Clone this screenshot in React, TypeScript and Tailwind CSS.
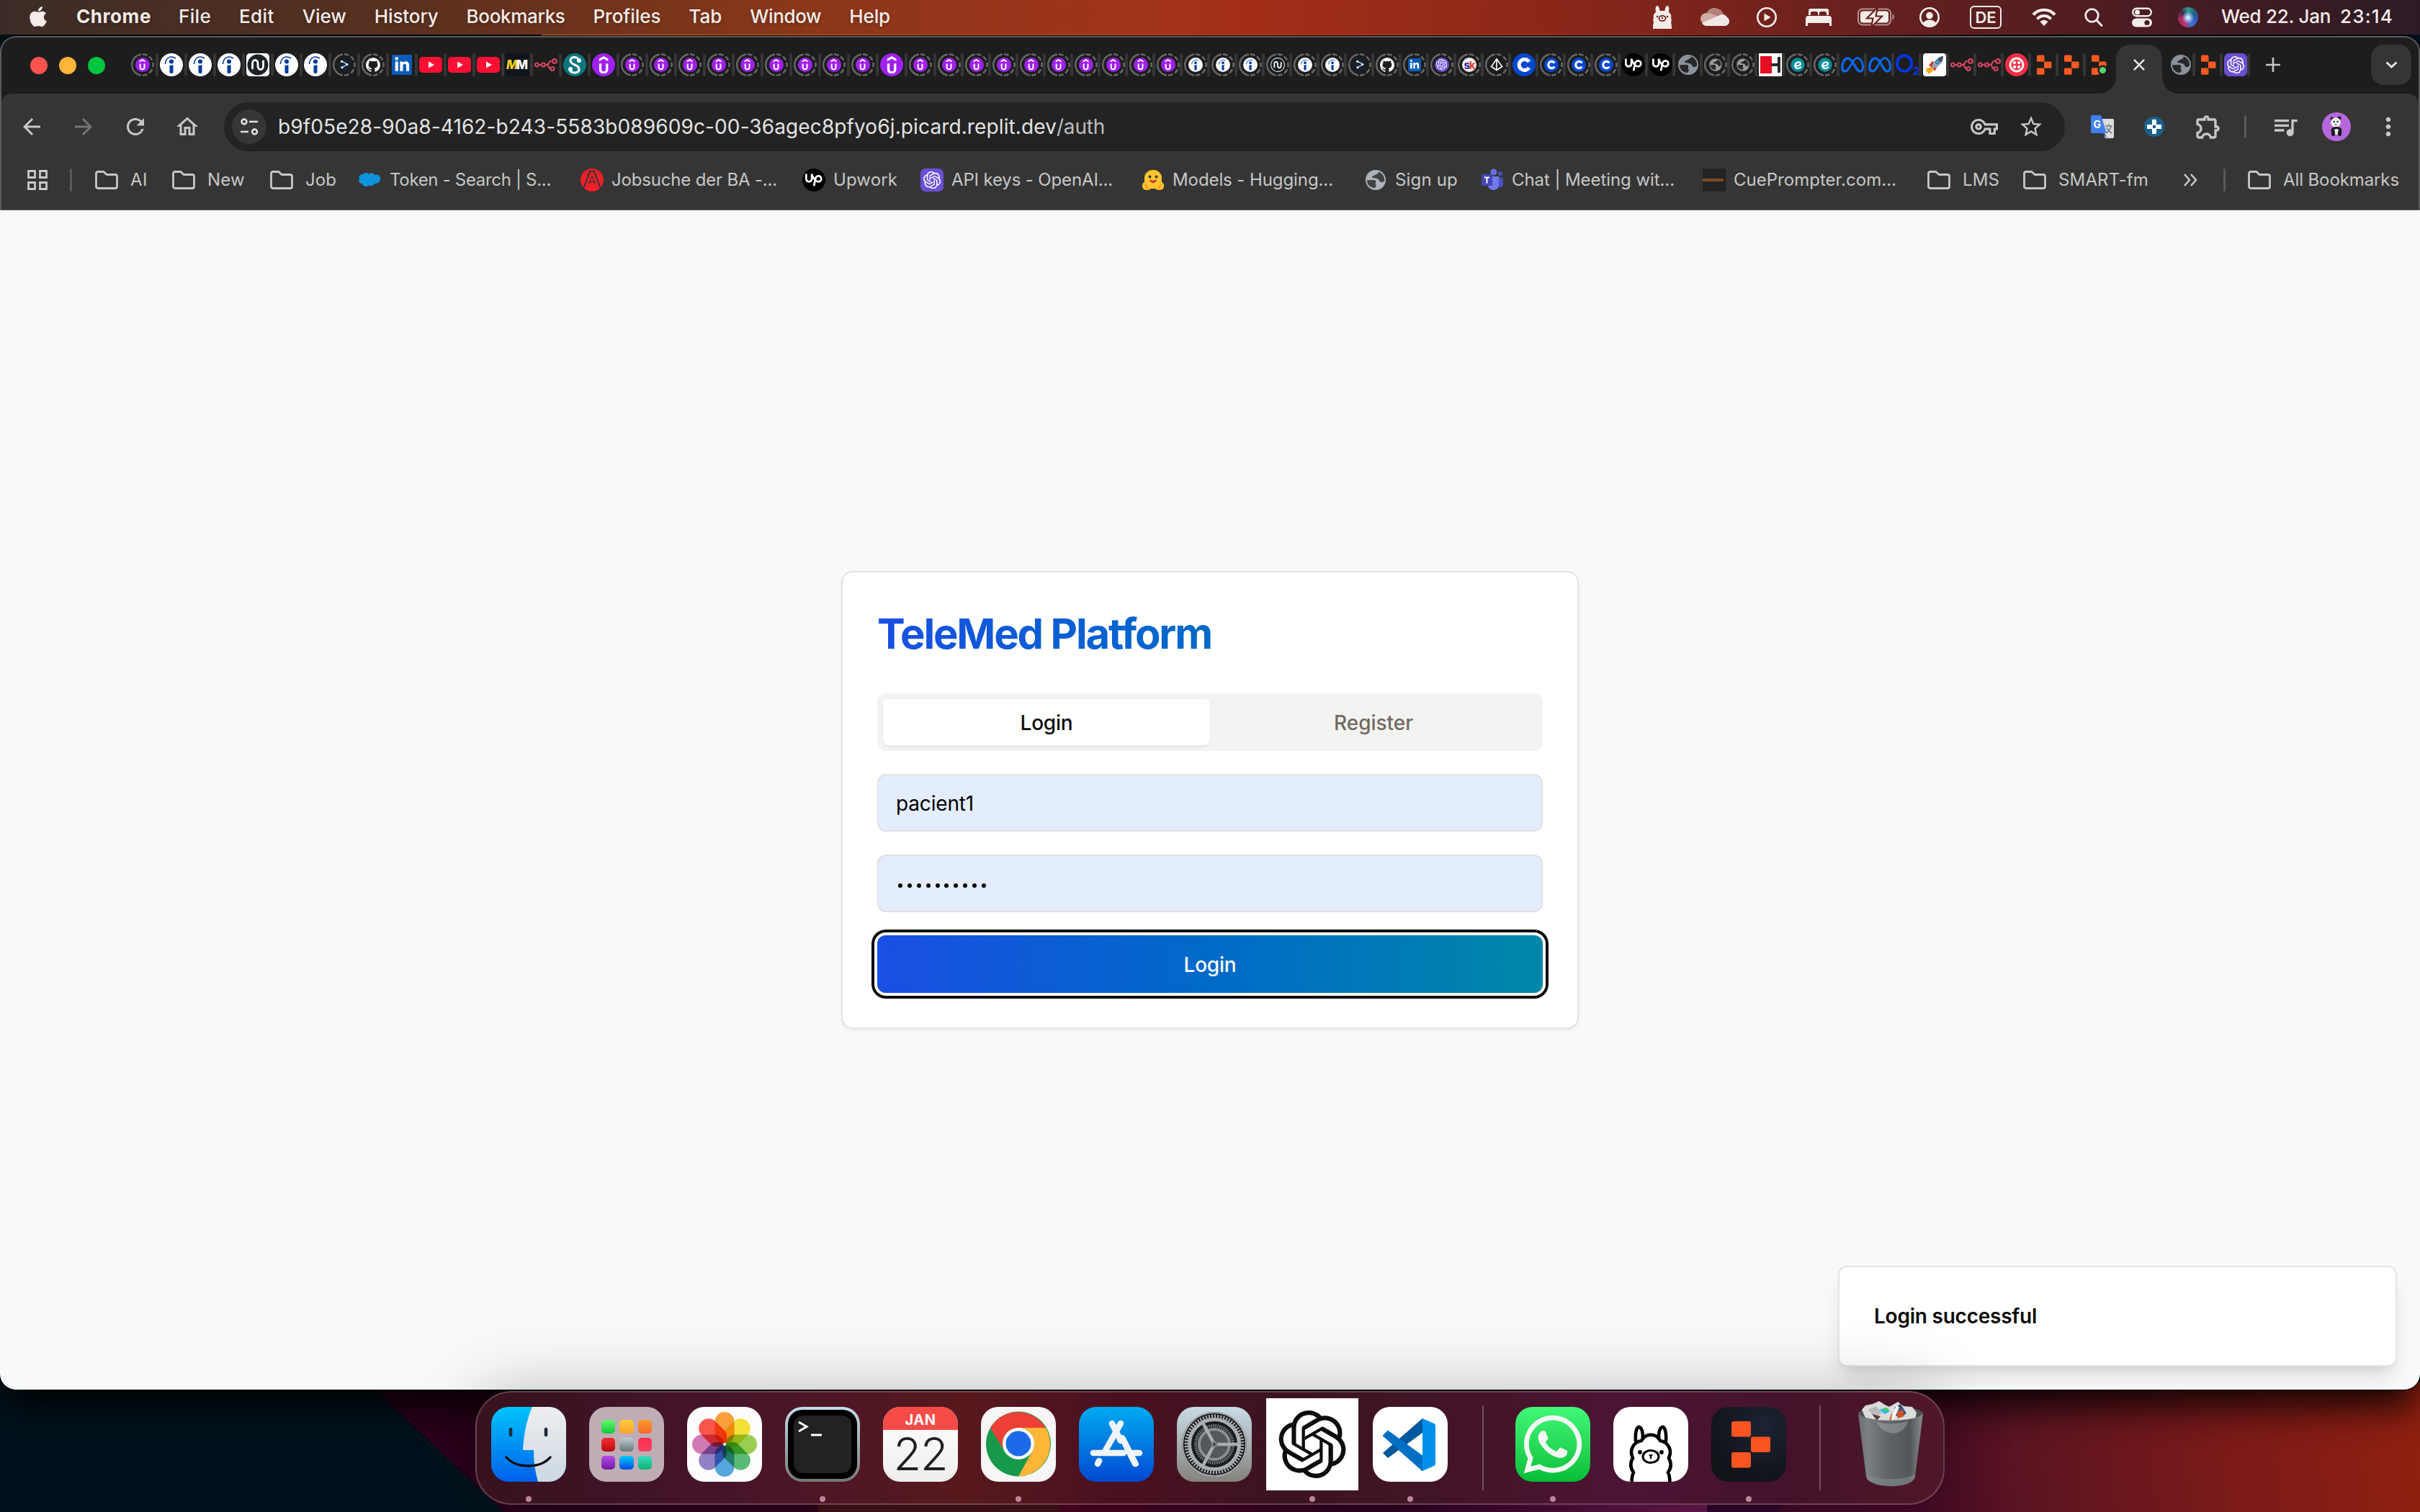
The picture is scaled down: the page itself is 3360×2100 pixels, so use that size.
import React, { useLayoutEffect, useRef, useState } from "react";
import { FaApple, FaWhatsapp, FaLinkedinIn } from "react-icons/fa";
import { SiUdemy, SiGithub, SiMeta, SiOpenai, SiUpwork } from "react-icons/si";
import { MdOutlineVpnKey, MdStarBorder, MdOutlineExtension, MdOutlineQueueMusic, MdMoreVert, MdArrowBack, MdArrowForward, MdRefresh, MdOutlineHome } from "react-icons/md";

/* Single-line label whose tracking is adjusted so that it fills exactly `w` pixels. */
function Fit({ w, className = "", children }: { w: number; className?: string; children: string }) {
  const ref = useRef<HTMLSpanElement>(null);
  const [tracking, setTracking] = useState(0);
  useLayoutEffect(() => {
    if (ref.current) setTracking((w - ref.current.getBoundingClientRect().width) / children.length);
  }, []);
  return (
    <span className={"inline-flex shrink-0 whitespace-pre " + className} style={{ width: w }}>
      <span ref={ref} style={{ letterSpacing: tracking }}>{children}</span>
    </span>
  );
}

/* ---------- Menu bar ---------- */

const MENUS: [string, number][] = [
  ["File", 45], ["Edit", 49], ["View", 61], ["History", 89], ["Bookmarks", 137], ["Profiles", 94], ["Tab", 46], ["Window", 99], ["Help", 57],
];

function MenuBar() {
  return (
    <div className="relative z-20 flex h-[48px] shrink-0 items-center bg-[linear-gradient(90deg,#3c2c27_0px,#59301f_560px,#8a3719_1100px,#a3331a_1640px,#a32e17_1720px,#8a2719_2160px,#67201f_2600px,#481c22_3000px,#2c1b25_3360px)] text-[26px] font-medium text-[#f3ece9]">
      <div className="flex h-full items-center pb-[3px] pl-[37px] [text-shadow:0_2px_4px_rgba(0,0,0,0.3)]">
        <FaApple className="mr-[37px] size-[32px]" />
        <Fit w={104} className="mr-[38px] font-bold">Chrome</Fit>
        <div className="flex gap-[38.9px]">
          {MENUS.map(([t, w]) => <Fit key={t} w={w}>{t}</Fit>)}
        </div>
      </div>
      <div className="ml-auto flex h-full items-center pr-[37px]">
        <svg className="h-[34px] w-[26px]" viewBox="0 0 26 34" fill="currentColor">
          <path d="M4 10C3 4 4 1 6 1s3 3 3.500 7h7C17 4 18 1 20 1s3 3 2 9c3 2 4 5 3 8 1 2 1 4 0 6 1 3 1 6 1 9H0c0-3 0-6 1-9-1-2-1-4 0-6-1-3 0-6 3-8Z" />
          <ellipse cx="13" cy="18.500" rx="4.600" ry="3.600" fill="none" stroke="#7a231a" strokeWidth="1.800" />
          <circle cx="6" cy="16" r="1.300" fill="#7a231a" /><circle cx="20" cy="16" r="1.300" fill="#7a231a" /><circle cx="13" cy="18" r="1.200" fill="#7a231a" />
        </svg>
        <svg className="ml-[40px] h-[28px] w-[40px]" viewBox="0 0 40 28">
          <path d="M9 24A9 9 0 0 1 0 17C0 11 4 8 9 8A12 12 0 0 1 20 1L30 12 16 21Z" fill="#d0aca7" />
          <path d="M10 7.500A12 12 0 0 1 32 10.500L26 13Z" fill="#b5807a" />
          <path d="M2 22 27 11c3-2 8-1 10 3 5 3 4 12-4 12H9c-4 0-6-2-7-4Z" fill="#f0e8e6" />
        </svg>
        <svg className="ml-[38px] size-[28px]" viewBox="0 0 28 28" fill="none" stroke="currentColor"><circle cx="14" cy="14" r="12.700" strokeWidth="2.600" /><path d="M10.500 8.500v11l9-5.500Z" fill="currentColor" stroke="none" /></svg>
        <svg className="ml-[40px] h-[25px] w-[36px]" viewBox="0 0 36 25" fill="currentColor"><path d="M4 9V3a3 3 0 0 1 3-3h22a3 3 0 0 1 3 3v6h-3V6c0-1-1-2-2-2h-6c-1 0-2 1-2 2v3h-2V6c0-1-1-2-2-2H9C8 4 7 5 7 6v3Z" /><path d="M0 24V14c0-2 1-4 4-4h28c3 0 4 2 4 4v10h-3v-4H3v4Z" /></svg>
        <svg className="ml-[36px] h-[30px] w-[52px]" viewBox="0 0 52 30">
          <rect x="1" y="3.500" width="45" height="22" rx="6" fill="none" stroke="#fff" strokeOpacity=".5" strokeWidth="2" />
          <rect x="4" y="6.500" width="39" height="16" rx="3.500" fill="#f3ece9" /><path d="M48.500 10v9c3-1 3-8 0-9Z" fill="#fff" opacity=".5" />
          <path d="M28 1 13 16.500h8.500L19 29l15-15.500h-8.500Z" fill="#f3ece9" stroke="#67201f" strokeWidth="2.200" />
        </svg>
        <svg className="ml-[34px] size-[28px]" viewBox="0 0 28 28"><circle cx="14" cy="14" r="12.700" fill="none" stroke="currentColor" strokeWidth="2.600" /><circle cx="14" cy="11.500" r="4.800" fill="currentColor" /><path d="M5 22c3-6 15-6 18 0-4 6-14 6-18 0Z" fill="currentColor" /></svg>
        <div className="ml-[42px] flex h-[32px] w-[44px] items-center justify-center rounded-[6px] border-2 border-[#f3ece9] text-[22px] font-semibold">DE</div>
        <svg className="ml-[42px] h-[26px] w-[34px]" viewBox="0 0 34 26" fill="none" stroke="currentColor" strokeWidth="4.200"><path d="M2 9.500C10 .500 24 .500 32 9.500M7.500 15.500c5-6 14-6 19 0" /><path d="m17 25-5.500-5.800c3-3.400 8-3.400 11 0Z" fill="currentColor" stroke="none" /></svg>
        <svg className="ml-[39px] size-[26px]" viewBox="0 0 26 26" fill="none" stroke="currentColor" strokeWidth="2.800" strokeLinecap="round"><circle cx="10.500" cy="10.500" r="8.800" /><path d="m17 17 7 7.500" /></svg>
        <svg className="ml-[40px] size-[28px]" viewBox="0 0 28 28"><rect x="1.200" y="1.700" width="25.600" height="10.600" rx="5.300" fill="none" stroke="currentColor" strokeWidth="2.400" /><circle cx="7.500" cy="7" r="3.500" fill="currentColor" /><rect y="15.500" width="28" height="12" rx="6" fill="currentColor" /><circle cx="21" cy="21.500" r="3.600" fill="#481c22" /></svg>
        <div className="ml-[36px] size-[28px] rounded-full bg-[radial-gradient(circle_at_50%_52%,#ffffff_0%,#9fc4ef_16%,transparent_42%),conic-gradient(#2c9c8a,#23627f,#2a58b8,#3b76d8,#c02f6c,#b02b60,#402a4c,#2c9c8a)]" />
        <Fit w={152} className="ml-[32px] mb-[3px]">Wed 22. Jan</Fit>
        <Fit w={74} className="mb-[3px] ml-[13px]">23:14</Fit>
      </div>
    </div>
  );
}

/* ---------- Favicons (32 × 32 drawings) ---------- */

function Globe({ c = "#8a929c", bg = "#1d1d1d" }: { c?: string; bg?: string }) {
  return (
    <svg viewBox="0 0 32 32" className="size-full"><circle cx="16" cy="16" r="14" fill={c} /><path d="M4 16c4 1 10-1 12 1 1 2-1 3 0 5 2 2 0 4-1 5C8 27 4 22 4 16ZM19 4.500c2 2-1 3-3 4-2 2-5 1-5 4 3 2 8 0 10 4 1 2 2 4 7 1 1-6-3-12-9-13Z" fill={bg} opacity=".9" /></svg>
  );
}

function Nodes() {
  return <svg viewBox="0 0 32 32" className="size-full" fill="none" stroke="#d2455f" strokeWidth="2.200"><circle cx="3.500" cy="16" r="2.500" /><circle cx="12.500" cy="16" r="2.500" /><circle cx="28" cy="11" r="2.800" /><circle cx="25" cy="21.500" r="2.500" /><path d="M6 16h4m5 0h2c4 0 2-5 6-5h2m-8 5c4 0 2 5 5 5.500" /></svg>;
}

function Replit({ dot = false }: { dot?: boolean }) {
  return <svg viewBox="0 0 32 32" className="size-full" fill="#fc5a20"><rect x="6" y="2.500" width="10.500" height="9.200" rx="1.500" /><rect x="16" y="11.500" width="10.500" height="9.200" rx="1.500" /><rect x="6" y="20.500" width="10.500" height="9.200" rx="1.500" />{dot && <circle cx="21.500" cy="23.500" r="7" fill="#1d1d1d" />}{dot && <rect x="6" y="20.500" width="8" height="9.200" rx="1.500" />}{dot && <circle cx="21.500" cy="23.500" r="4.500" fill="#53d46f" />}</svg>;
}

function TwilioDisc() {
  return <svg viewBox="0 0 32 32" className="size-full"><circle cx="16" cy="16" r="16" fill="#f22f46" /><circle cx="16" cy="16" r="9" fill="none" stroke="#fff" strokeWidth="2.800" /><g fill="#fff"><circle cx="13" cy="13" r="2.200" /><circle cx="19" cy="13" r="2.200" /><circle cx="13" cy="19" r="2.200" /><circle cx="19" cy="19" r="2.200" /></g></svg>;
}

type Kind = "U" | "i" | "nu" | "gt" | "gh" | "in" | "yt" | "mm" | "n8" | "S" | "ai" | "sk" | "py" | "C" | "up" | "gl" | "H" | "e" | "me" | "o2" | "rk" | "tw" | "re" | "rd";

function Favicon({ k, small = false }: { k: Kind; small?: boolean }) {
  switch (k) {
    case "U": return <div className="flex size-full items-center justify-center rounded-full bg-[#a020f0] text-white"><SiUdemy className="size-[76%]" /></div>;
    case "i": return <svg viewBox="0 0 32 32" className="size-full"><circle cx="16" cy="16" r="16" fill="#fff" /><circle cx="16" cy="11.500" r="3" fill="#003a9b" /><path d="M14 17c2 .600 3 0 4-.500v10c0 1.500-4 1.500-4 0Z" fill="#003a9b" stroke="#003a9b" /><path d="M7.500 15C8 6 15 2.500 22 7" fill="none" stroke="#003a9b" strokeWidth="1.500" /></svg>;
    case "nu": return <svg viewBox="0 0 32 32" className="size-full" fill="none"><rect width="32" height="32" rx={small ? 16 : 5} fill="#fff" /><circle cx="16" cy="16" r="14.500" fill="#1c2127" /><path d="M8.500 21v-7c0-6 7.500-6 7.500 0v4c0 6 7.500 6 7.500 0v-7" stroke="#fff" strokeWidth="2.800" strokeLinecap="round" /></svg>;
    case "gt": return <svg viewBox="0 0 32 32" className="size-full" fill="none"><path d="m16 2 12 7v13l-12 8-12-8V9Z" fill="#11263c" /><path d="m10 8 13 7-12 7" stroke="#fff" strokeWidth="1.800" /><g fill="#fff"><circle cx="10.500" cy="8.500" r="2.400" /><circle cx="22" cy="15" r="2.400" /><circle cx="11" cy="22" r="2.400" /></g></svg>;
    case "gh": return <SiGithub className="size-full text-white" />;
    case "in": return <div className="flex size-full items-center justify-center p-[6%]"><div className="flex size-full items-center justify-center rounded-[2px] bg-[#0a5cb8]"><FaLinkedinIn className="size-[80%] text-white" /></div></div>;
    case "yt": return <svg viewBox="0 0 32 32" className="size-full"><rect y="5" width="32" height="22" rx="5" fill="#ff0f33" /><path d="M13 11.500v9l8-4.500Z" fill="#fff" /></svg>;
    case "mm": return <div className="flex size-full items-center justify-center bg-[#10151d] text-[17px] font-extrabold italic tracking-[-2px]"><span className="text-[#f2d322]">M</span><span className="pr-[2px] not-italic text-white">M</span></div>;
    case "n8": return <Nodes />;
    case "S": return <svg viewBox="0 0 32 32" className="size-full" fill="none"><circle cx="16" cy="16" r="16" fill="#0d7580" /><path d="M22 10c-2-6-12-6-12 0 0 7 12 5 12 12 0 6-10 7-13 1" stroke="#fff" strokeWidth="3" /><circle cx="22" cy="10" r="3" fill="#fff" /><circle cx="10" cy="22" r="3" fill="#fff" /></svg>;
    case "ai": return <div className={"flex size-full items-center justify-center bg-[#6b4fd3] " + (small ? "rounded-full" : "rounded-[7px]")}><SiOpenai className="size-[76%] text-white" /></div>;
    case "sk": return <div className="flex size-full items-center justify-center rounded-full bg-[#f3eef2] text-[15px] font-bold leading-none tracking-[-1px]"><span className="text-[#25259a]">s</span><span className="text-[#ee3b30]">k</span></div>;
    case "py": return <svg viewBox="0 0 32 32" className="size-full" fill="none" stroke="#fff" strokeWidth="2.600"><path d="M16 3 4 20l12 8 12-8ZM16 3v25" /></svg>;
    case "C": return <svg viewBox="0 0 32 32" className="size-full" fill="none"><circle cx="16" cy="16" r="16" fill="#0448cf" /><path d="M23 12a7.500 7.500 0 1 0 0 8" stroke="#fff" strokeWidth="5" /></svg>;
    case "up": return <div className="flex size-full items-center justify-center rounded-full bg-black text-white"><SiUpwork className="size-[74%]" /></div>;
    case "gl": return <Globe c={small ? "#9a9a9a" : "#8a929c"} />;
    case "H": return <svg viewBox="0 0 32 32" className="size-full"><path d="M0 0h32v32H0z" fill="#fff" /><path d="M2 4h16v24H2z" fill="#e50d22" /><path d="M26 5h4v22h-4v-9H17v-4h9Z" fill="#26262a" /></svg>;
    case "e": return <svg viewBox="0 0 32 32" className="size-full" fill="none"><circle cx="16" cy="16" r="15.500" fill="#0a8c9c" /><path d="M10 18c9 1 14-2 12-6-2-3-12-2-12 6 0 7 10 8 14 2" stroke="#fff" strokeWidth="3.500" /></svg>;
    case "me": return <SiMeta className="size-full text-[#0a68e8]" />;
    case "o2": return (
      <div className="flex size-full items-end">
        <svg viewBox="0 0 24 32" className="h-full w-[24px]"><ellipse cx="12" cy="14" rx="10" ry="11" fill="none" stroke="#0037ef" strokeWidth="3.800" /></svg>
        <span className="w-[8px] text-[14px] font-bold leading-[14px] tracking-[-1px] text-[#0037ef]">2</span>
      </div>
    );
    case "rk": return <svg viewBox="0 0 32 32" className="size-full"><rect width="32" height="32" rx="4" fill="#fff" /><path d="m8 17 5-6 5 3 2 4-4 7-2-4-4-3Z" fill="#d9271d" /><path d="M28 4c-8 1-14 8-16 14l3 3C23 18 28 12 28 4Z" fill="#8fa8bb" /><path d="M28 4c-3 0-6 2-8 4l5 5c2-3 3-6 3-9Z" fill="#35506b" /><circle cx="20" cy="12.500" r="2.400" fill="#4bb6e8" stroke="#34526c" /><path d="m12 19-7 2-1 6 3-2v4l5-3 3-4Z" fill="#f6a81c" /></svg>;
    case "tw": return <TwilioDisc />;
    case "re": return <Replit />;
    case "rd": return <Replit dot />;
  }
}

function TabIcon({ k, small }: { k: Kind; small: boolean }) {
  if (!small) return <div className="size-[32px] shrink-0"><Favicon k={k} /></div>;
  return (
    <div className="relative flex size-[32px] shrink-0 items-center justify-center">
      <svg className="absolute inset-0" viewBox="0 0 32 32" fill="none" stroke="#666" strokeWidth="2.600"><path d="M14 30.500A14.600 14.600 0 0 1 14 1.500" /><path d="M16 1.400A14.600 14.600 0 0 1 16 30.600" strokeDasharray="6.700 3" /></svg>
      <div className="size-[20px]"><Favicon k={k} small /></div>
    </div>
  );
}

/* A trailing dot marks a sleeping tab, drawn smaller inside a dashed ring. */
const WIDE_TABS = "U. i i i nu i i gt. gh. in yt yt yt mm n8 S U U. U. U. U. U. U. U. U. U. U U.".split(" ");
const NARROW_TABS = "U. U. U. U. U. U. U. U. U. i. i. i. nu. i. i. gt. gh. in. ai. sk. py. C C. C. C. up up gl gl. gl. H e. e. me me o2 rk n8 n8 tw re re rd".split(" ");

function Sep() {
  return <div className="h-[32px] w-[4px] shrink-0 rounded-full bg-[#363636]" />;
}

function TabStrip() {
  return (
    <div className="flex h-[78px] items-center pb-[2px] pl-[40px]">
      <div className="mt-[2px] flex gap-[16px]">
        <div className="size-[24px] rounded-full bg-[#ff544d]" /><div className="size-[24px] rounded-full bg-[#ffb43a]" /><div className="size-[24px] rounded-full bg-[#00c63d]" />
      </div>
      <div className="ml-[36px] flex">
        {WIDE_TABS.map((t, i) => (
          <div key={i} className="flex w-[40px] items-center gap-[2px]"><TabIcon k={t.replace(".", "") as Kind} small={t.endsWith(".")} /><Sep /></div>
        ))}
        {NARROW_TABS.map((t, i) => (
          <div key={i} className="flex w-[38px] items-center"><TabIcon k={t.replace(".", "") as Kind} small={t.endsWith(".")} />{i < 42 && <Sep />}</div>
        ))}
      </div>
      <div className="relative ml-[2px] -mb-[2px] mt-[10px] flex h-[68px] w-[64px] shrink-0 items-center justify-center rounded-t-[20px] bg-[#353535] pb-[12px]">
        <svg className="size-[16px]" viewBox="0 0 17 17" stroke="#e8e8e8" strokeWidth="2.600"><path d="m1 1 15 15M16 1 1 16" /></svg>
        <svg className="absolute bottom-0 -left-[24px] size-[24px]" viewBox="0 0 24 24" fill="#353535"><path d="M24 0v24H0C14 24 24 14 24 0Z" /></svg>
        <svg className="absolute bottom-0 -right-[24px] size-[24px]" viewBox="0 0 24 24" fill="#353535"><path d="M0 0v24h24C10 24 0 14 0 0Z" /></svg>
      </div>
      <div className="ml-[10px] flex">
        {["gl", "re", "ai"].map((k) => <div key={k} className="flex w-[38px] items-center"><TabIcon k={k as Kind} small={false} /><Sep /></div>)}
      </div>
      <svg className="ml-[20px] size-[20px]" viewBox="0 0 20 20" stroke="#c7c7c7" strokeWidth="2.600"><path d="M10 0v20M0 10h20" /></svg>
      <div className="ml-auto mr-[10px] flex h-[56px] w-[56px] items-center justify-center rounded-[18px] bg-[#353535]">
        <svg className="h-[10px] w-[17px]" viewBox="0 0 17 10" fill="none" stroke="#e3e3e3" strokeWidth="3"><path d="m1.500 1.500 7 6.500 7-6.500" /></svg>
      </div>
    </div>
  );
}

function Toolbar() {
  return (
    <div className="flex h-[92px] items-center text-[#c7c7c7]">
      <MdArrowBack className="ml-[24px] size-[36px]" />
      <MdArrowForward className="ml-[36px] size-[36px] text-[#757575]" />
      <MdRefresh className="ml-[36px] size-[36px]" />
      <MdOutlineHome className="ml-[36px] size-[36px]" />
      <div className="ml-[33px] flex h-[68px] w-[2556px] shrink-0 items-center rounded-full bg-[#232323] pl-[11px] pr-[29px]">
        <div className="flex size-[48px] items-center justify-center rounded-full bg-[#363636]">
          <svg className="size-[26px]" viewBox="0 0 26 26" fill="none" stroke="#e3e3e3" strokeWidth="2.600"><circle cx="6" cy="6" r="3.400" /><path d="M13 6h12M1 20h11" /><circle cx="20.500" cy="20" r="3.400" /></svg>
        </div>
        <div className="ml-[16px] flex text-[28px] text-[#e3e3e3]">
          <Fit w={1081}>b9f05e28-90a8-4162-b243-5583b089609c-00-36agec8pfyo6j.picard.replit.dev</Fit>
          <Fit w={67} className="text-[#bdbdbd]">/auth</Fit>
        </div>
        <MdOutlineVpnKey className="ml-auto size-[38px]" />
        <MdStarBorder className="ml-[28px] size-[36px]" />
      </div>
      <svg className="ml-[36px] size-[32px] shrink-0" viewBox="0 0 32 32">
        <path d="M12 5h18a2 2 0 0 1 2 2v23a2 2 0 0 1-2 2H20Z" fill="#dcdcdc" /><path d="m16 25 7 7-4-7Z" fill="#1a50c0" />
        <path d="M2 0h12l8 25H2a2 2 0 0 1-2-2V2a2 2 0 0 1 2-2Z" fill="#4280ee" />
        <text x="3.500" y="17.500" fontSize="14" fontWeight="700" fill="#fff">G</text><path d="M20 15h10m-5-2.500V15m3 0c-1 5-4 8-7 10m1-8c1 3 4 6 7 8" stroke="#6c8088" strokeWidth="1.600" fill="none" />
      </svg>
      <div className="ml-[42px] flex size-[28px] items-center justify-center rounded-full bg-[#19618b]"><svg viewBox="0 0 20 20" className="size-[20px]"><path d="M7 0h6v7h7v6h-7v7H7v-7H0V7h7Z" fill="#fff" /><path d="M8 8h4v4H8Z" fill="#19618b" /></svg></div>
      <MdOutlineExtension className="ml-[41px] size-[40px]" />
      <div className="ml-[30px] h-[32px] w-[3px] rounded-full bg-[#5a5a5a]" />
      <MdOutlineQueueMusic className="ml-[34px] size-[40px]" />
      <div className="ml-[31px] size-[40px] overflow-hidden rounded-full bg-[#b667dc]">
        <svg viewBox="0 0 40 40" className="size-full"><circle cx="14" cy="9" r="2.500" fill="#1b1b1e" /><circle cx="24" cy="8" r="2.500" fill="#1b1b1e" /><circle cx="19" cy="14" r="6.800" fill="#f2f2f2" /><ellipse cx="20" cy="25" rx="7.500" ry="5" fill="#1b1b1e" /><ellipse cx="20" cy="27" rx="3.500" ry="4" fill="#eee" /><rect x="13" y="25" width="5" height="8" rx="2.500" fill="#1b1b1e" /><rect x="22" y="25" width="5" height="8" rx="2.500" fill="#1b1b1e" /><circle cx="16.500" cy="13" r="1.200" fill="#1b1b1e" /><circle cx="21.500" cy="13" r="1.200" fill="#1b1b1e" /><path d="M17.500 17h3" stroke="#1b1b1e" /></svg>
      </div>
      <MdMoreVert className="ml-[32px] size-[40px]" />
    </div>
  );
}

function Folder() {
  return <svg className="mr-[6px] h-[26px] w-[32px]" viewBox="0 0 32 26" fill="none" stroke="#c7c7c7" strokeWidth="2.800" strokeLinejoin="round"><path d="M1.500 4c0-1.500 1-2.500 2.500-2.500h8l4 4h12c1.500 0 2.500 1 2.500 2.500v14c0 1.500-1 2.500-2.500 2.500H4c-1.500 0-2.500-1-2.500-2.500Z" /></svg>;
}

const BOOKMARKS: { col: string; label: string; w: number; icon: React.ReactNode }[] = [
  { col: "w-[107px]", label: "AI", w: 24, icon: <Folder /> },
  { col: "w-[136px]", label: "New", w: 52, icon: <Folder /> },
  { col: "w-[123px]", label: "Job", w: 43, icon: <Folder /> },
  { col: "w-[308px]", label: "Token - Search | S...", w: 224, icon: <svg viewBox="0 0 32 32" className="size-[32px]"><path d="M6 8c3-3 6-2 8 0 3-3 7-2 8 1 6-2 9 3 8 7s-5 5-8 5c-2 4-6 4-8 2-3 4-8 2-9-2-4 0-6-3-4-7-2-3 1-6 5-6Z" fill="#0d94dc" /></svg> },
  { col: "w-[308px]", label: "Jobsuche der BA -...", w: 230, icon: <svg viewBox="0 0 32 32" className="size-[32px]"><circle cx="16" cy="16" r="16" fill="#ef2027" /><path d="m4 28 9-24h6l9 24" fill="none" stroke="#353535" strokeWidth="2" /><path d="M11 21 16 9l5 12c-3-2-7-2-10 0Z" fill="#353535" /><path d="m13.500 18 2.500-6 2.500 6Z" fill="#ef2027" /></svg> },
  { col: "w-[164px]", label: "Upwork", w: 89, icon: <div className="size-[32px]"><Favicon k="up" /></div> },
  { col: "w-[307px]", label: "API keys - OpenAI...", w: 224, icon: <div className="size-[32px]"><Favicon k="ai" /></div> },
  { col: "w-[309px]", label: "Models - Hugging...", w: 223, icon: <svg viewBox="0 0 32 32" className="size-[32px]"><path d="M4 13a12 11 0 0 1 24 0v6c4 2 4 7 1 10-4 2-8 1-10-1h-6c-2 2-6 3-10 1-3-3-3-8 1-10Z" fill="#ffc42e" /><circle cx="11.500" cy="11.500" r="1.900" fill="#3b3435" /><circle cx="20.500" cy="11.500" r="1.900" fill="#3b3435" /><path d="M11 15.500c3 1.500 7 1.500 10 0-.500 6-9.500 6-10 0Z" fill="#c9352c" /><path d="m9 29-4-7m18 7 4-7" stroke="#f0962a" strokeWidth="2" /></svg> },
  { col: "w-[162px]", label: "Sign up", w: 87, icon: <div className="size-[32px]"><Globe c="#aeb4ba" bg="#353535" /></div> },
  { col: "w-[308px]", label: "Chat | Meeting wit...", w: 226, icon: <svg viewBox="0 0 32 32" className="size-[32px]"><circle cx="18" cy="5" r="4.500" fill="#6570e0" /><circle cx="27" cy="7" r="3" fill="#4a52c0" /><rect x="22" y="12" width="9" height="14" rx="4" fill="#4a52c0" /><path d="M10 11h15v12c0 9-14 9-15 1Z" fill="#717ae8" /><rect x="1" y="8" width="15" height="16" rx="1.500" fill="#4148b4" /><path d="M5 12.500h7m-3.500 0v8" stroke="#fff" strokeWidth="2" /></svg> },
  { col: "w-[312px]", label: "CuePrompter.com...", w: 226, icon: <div className="flex size-[32px] flex-col justify-center bg-[#232323]"><div className="h-[4px] w-[29px] bg-[#7c4a22]" /></div> },
  { col: "w-[133px]", label: "LMS", w: 51, icon: <Folder /> },
  { col: "w-[222px]", label: "SMART-fm", w: 125, icon: <Folder /> },
];

function BookmarksBar() {
  return (
    <div className="flex h-[70px] items-center border-b-2 border-[#424242] pb-[12px] pl-[36px] text-[24px] text-[#c7c7c7]">
      <svg className="size-[28px]" viewBox="0 0 28 28" fill="none" stroke="#c7c7c7" strokeWidth="2.800"><path d="M1.500 1.500h9v9h-9ZM17.500 1.500h9v9h-9ZM1.500 17.500h9v9h-9ZM17.500 17.500h9v9h-9Z" /></svg>
      <div className="ml-[31px] h-[32px] w-[3px] rounded-full bg-[#5a5a5a]" />
      <div className="ml-[32px] flex">
        {BOOKMARKS.map((b) => (
          <div key={b.label} className={"flex items-center " + b.col}>{b.icon}<Fit w={b.w} className="ml-[11px]">{b.label}</Fit></div>
        ))}
      </div>
      <svg className="ml-[1px] h-[18px] w-[19px]" viewBox="0 0 19 18" fill="none" stroke="#c7c7c7" strokeWidth="2.600"><path d="m1 1 7 8-7 8M10 1l7 8-7 8" /></svg>
      <div className="ml-[36px] mr-[31px] h-[32px] w-[3px] rounded-full bg-[#5a5a5a]" />
      <Folder /><Fit w={161} className="ml-[11px]">All Bookmarks</Fit>
    </div>
  );
}

/* ---------- Page ---------- */

function LoginCard() {
  return (
    <div className="h-[636px] w-[1024px] rounded-[16px] border-2 border-[#e6e3e2] bg-white p-[48px] shadow-[0_2px_4px_rgba(0,0,0,0.06)]">
      <h1 className="mt-[1px] flex h-[72px] items-center bg-[linear-gradient(90deg,#1a4fe3,#006ac8_50%,#0088a8)] bg-clip-text text-[58px] font-bold text-transparent"><Fit w={464}>TeleMed Platform</Fit></h1>
      <div className="mt-[47px] flex h-[80px] rounded-[12px] bg-[#f3f3f1] p-[8px] text-[28px] font-medium">
        <div className="flex flex-1 items-center justify-center rounded-[8px] bg-white pt-[1px] text-[#0c0a09] shadow-[0_2px_4px_rgba(0,0,0,0.06)]"><Fit w={73}>Login</Fit></div>
        <div className="flex flex-1 items-center justify-center pt-[1px] text-[#716962]"><Fit w={110}>Register</Fit></div>
      </div>
      <div className="mt-[32px] flex h-[80px] items-center rounded-[12px] border-2 border-[#e0e0e2] bg-[#e4edfe] px-[24px] pt-[2px] text-[28px] text-black"><Fit w={108}>pacient1</Fit></div>
      <div className="mt-[32px] flex h-[80px] items-center gap-[6.900px] rounded-[12px] border-2 border-[#e0e0e2] bg-[#e4edfe] px-[27px] pt-[5px]">
        {Array.from({ length: 10 }, (_, i) => <div key={i} className="size-[6px] shrink-0 rounded-full bg-black" />)}
      </div>
      <div className="mt-[32px] flex h-[80px] items-center justify-center rounded-[12px] bg-[linear-gradient(90deg,#1a4fe3,#006ac8_50%,#0088a8)] pt-[1px] text-[28px] font-medium text-[#fafaf9] shadow-[0_0_0_4px_#fff,0_0_0_8px_#0c0a09]"><Fit w={73}>Login</Fit></div>
    </div>
  );
}

/* ---------- Dock ---------- */

const TILE = "size-[104px] rounded-[24px]";

function Finder() {
  return (
    <svg viewBox="0 0 104 104" className={TILE}>
      <defs><linearGradient id="fb" x2="0" y2="1"><stop stopColor="#00c4fb" /><stop offset="1" stopColor="#0060ec" /></linearGradient><linearGradient id="fw" x2="0" y2="1"><stop stopColor="#eeeef0" /><stop offset="1" stopColor="#ccd8e2" /></linearGradient></defs>
      <path d="M0 0h104v104H0Z" fill="url(#fb)" /><path d="M57 0C49 18 45 40 44 60h15c0 16 2 30 6 44h39V0Z" fill="url(#fw)" />
      <path d="M27 31v8M76 31v8" stroke="#1d2b3b" strokeWidth="4.600" strokeLinecap="round" /><path d="M21 70c14 16 47 16 61 0" fill="none" stroke="#0b0f14" strokeWidth="3.400" strokeLinecap="round" />
    </svg>
  );
}

function Launchpad() {
  return (
    <div className="grid size-[104px] grid-cols-3 content-center justify-center gap-[6px] rounded-[24px] bg-[#bfadb5] px-[17px]">
      <div className="h-[19px] rounded-[5px] bg-linear-to-b from-[#5bfa6b] to-[#02c838]" /><div className="h-[19px] rounded-[5px] bg-linear-to-b from-[#fdce40] to-[#fca028]" /><div className="h-[19px] rounded-[5px] bg-linear-to-b from-[#fc9a28] to-[#f2662a]" />
      <div className="h-[19px] rounded-[5px] bg-linear-to-b from-[#fb2c30] to-[#b30d12]" /><div className="h-[19px] rounded-[5px] bg-linear-to-b from-[#bccbd2] to-[#6f7779]" /><div className="h-[19px] rounded-[5px] bg-linear-to-b from-[#ff2d50] to-[#fb4261]" />
      <div className="h-[19px] rounded-[5px] bg-linear-to-b from-[#b548e6] to-[#7119a5]" /><div className="h-[19px] rounded-[5px] bg-linear-to-b from-[#00c8f8] to-[#0a46e2]" /><div className="h-[19px] rounded-[5px] bg-linear-to-b from-[#38dcc0] to-[#03b274]" />
    </div>
  );
}

const PETALS = ["#fb9a2d", "#f5e02a", "#95cc45", "#4fb86a", "#49a2dc", "#8a78c2", "#d070ae", "#fb4a3e"];

function Photos() {
  return (
    <svg viewBox="0 0 104 104" className={TILE + " isolate"}>
      <path d="M0 0h104v104H0Z" fill="#fdfdfd" />
      {PETALS.map((c, i) => <rect key={c} x="38.500" y="7" width="27" height="44" rx="13.500" fill={c} className="mix-blend-multiply" opacity=".93" transform={`rotate(${i * 45} 52 52)`} />)}
      <circle cx="52" cy="52" r="2" fill="#fff" />
    </svg>
  );
}

function Terminal() {
  return (
    <div className="size-[104px] rounded-[24px] bg-linear-to-b from-[#c4dfec] to-[#777] p-[4px]">
      <div className="size-full rounded-[20px] bg-black p-[8px]">
        <svg viewBox="0 0 80 80" className="size-full rounded-[13px] bg-[#222]" fill="none" stroke="#fff" strokeWidth="3"><path d="m7 9 11 6.500L7 22M24 27h15" /></svg>
      </div>
    </div>
  );
}

function CalendarIcon() {
  return (
    <div className="flex size-[104px] flex-col items-center overflow-hidden rounded-[24px] bg-linear-to-b from-white to-[#efeeec]">
      <div className="flex h-[32px] w-full items-center justify-center bg-[#f74b47] pt-[3px] text-[20px] font-bold text-white"><Fit w={43}>JAN</Fit></div>
      <div className="flex h-[66px] items-center text-[63px] font-light text-[#1f1f22]"><Fit w={75}>22</Fit></div>
    </div>
  );
}

function ChromeIcon() {
  return (
    <svg viewBox="0 0 104 104" className={TILE}>
      <path d="M0 0h104v104H0Z" fill="#f7f5f5" /><circle cx="52" cy="51.500" r="45" fill="#17994b" />
      <path d="M13 29a45 45 0 0 1 77 0H52a22 22 0 0 0-19 33Z" fill="#ee4036" /><path d="M90 29a45 45 0 0 1-38 67.500L71 62A22 22 0 0 0 52 29Z" fill="#ffb637" />
      <circle cx="52" cy="51" r="22" fill="#fff" /><circle cx="52" cy="51" r="17.500" fill="#1c6ae8" />
    </svg>
  );
}

function AppStore() {
  return (
    <svg viewBox="0 0 104 104" className={TILE}>
      <defs><linearGradient id="as" x2="0" y2="1"><stop stopColor="#02aaf0" /><stop offset="1" stopColor="#0049d2" /></linearGradient></defs>
      <path d="M0 0h104v104H0Z" fill="url(#as)" />
      <g stroke="#eff5fb" strokeWidth="8.500" strokeLinecap="round"><path d="M46 23 58 47M60 43 78 79" /><path d="M58 23 36 62M28 75l-2 4" /><path d="M20 64h42M75 64h9" /></g>
      <path d="m62 46 17 33" stroke="#eff5fb" strokeWidth="8" strokeLinecap="round" />
    </svg>
  );
}

function SettingsIcon() {
  return (
    <svg viewBox="0 0 104 104" className={TILE} fill="none">
      <defs><linearGradient id="se" x2="0" y2="1"><stop stopColor="#c9dce6" /><stop offset="1" stopColor="#85827e" /></linearGradient></defs>
      <path d="M0 0h104v104H0Z" fill="url(#se)" /><circle cx="52" cy="52" r="45" fill="#191b1c" /><circle cx="52" cy="52" r="44" stroke="#b8babb" strokeWidth="1.600" />
      <circle cx="52" cy="52" r="39" stroke="#aeb1b2" strokeWidth="5" strokeDasharray="2 2.080" /><circle cx="52" cy="52" r="34.500" stroke="#aaaeb0" strokeWidth="5" /><circle cx="52" cy="52" r="26" fill="#2a2c2d" stroke="#808385" strokeWidth="4" strokeDasharray="1.500 1.500" />
      <circle cx="52" cy="52" r="21" fill="#55585a" stroke="#8c9092" strokeWidth="4" /><path d="M52 52h33M52 52 36 22M52 52 36 82" stroke="#a9adaf" strokeWidth="4.500" /><circle cx="52" cy="52" r="4.500" fill="#7c7f81" /><circle cx="52" cy="52" r="1.600" fill="#222" />
    </svg>
  );
}

function VSCode() {
  return (
    <svg viewBox="0 0 104 104" className={TILE}>
      <path d="M0 0h104v104H0Z" fill="#fff" /><path d="M14 64 21 71 69 36V16Z" fill="#00589e" /><path d="M14 40 21 33 69 68V89Z" fill="#0070c4" stroke="#0070c4" strokeLinejoin="round" /><path d="m69 16 16 7c1 .500 2 1.500 2 3v53c0 1.500-1 2.500-2 3l-16 7Z" fill="#0090ec" />
    </svg>
  );
}

function WhatsApp() {
  return <div className="flex size-[104px] items-center justify-center rounded-[24px] bg-linear-to-b from-[#40f877] to-[#02be38]"><FaWhatsapp className="size-[92px] text-[#f4f6f4]" /></div>;
}

function Ollama() {
  return (
    <svg viewBox="0 0 104 104" className={TILE} fill="none" stroke="#000" strokeWidth="4.600" strokeLinecap="round">
      <path d="M0 0h104v104H0Z" fill="#fff" stroke="none" />
      <path d="M26 106c-1-6 0-11 2-15-5-7-5-13-1-20-5-10 0-22 12-24 6-11 20-11 26 0 12 2 17 14 12 24 4 7 4 13-1 20 2 4 3 9 2 15" />
      <path d="M31 47C30 34 33 27 36 28c4 1 5 8 5 16M73 47c1-13-2-20-5-19-4 1-5 8-5 16" /><ellipse cx="52" cy="69" rx="11" ry="8.500" strokeWidth="3" />
      <path d="m50.500 67 1.500 1 1.500-1M52 68v3.500" strokeWidth="2.200" /><circle cx="37" cy="63" r="2.900" fill="#000" stroke="none" /><circle cx="67" cy="63" r="2.900" fill="#000" stroke="none" />
    </svg>
  );
}

function ReplitDock() {
  return (
    <div className="size-[104px] rounded-[24px] bg-[radial-gradient(circle_at_70%_25%,#1c2433,#12161d_60%,#0e1114)]">
      <svg viewBox="0 0 104 104" className="size-full" fill="#fc5422"><rect x="28" y="20" width="27" height="21.500" rx="3" /><rect x="55" y="41.500" width="27" height="21.500" rx="3" /><rect x="28" y="63" width="27" height="21.500" rx="3" /></svg>
    </div>
  );
}

function Trash() {
  return (
    <svg viewBox="0 0 92 120" className="h-[120px] w-[92px]">
      <defs><linearGradient id="tr"><stop stopColor="#6d7376" /><stop offset=".15" stopColor="#7d8487" /><stop offset=".45" stopColor="#62676a" /><stop offset=".8" stopColor="#54595c" /><stop offset="1" stopColor="#8b9295" /></linearGradient></defs>
      <ellipse cx="46" cy="17" rx="45" ry="10" fill="#4c5154" /><path d="m6 12 5-6 10-2 9-4 8 5 6 3 12-7 8 6 12 1 6 8-2 9-34 5L11 23Z" fill="#dcdcdb" />
      <path d="m14 12 12-5 8 10-10 4Z" fill="#b9babb" /><path d="m30 12 10-3 5 5-7 4Z" fill="#2ebcd8" /><path d="m36 9 8 1-5 4Z" fill="#63cf3f" /><path d="m52 8 8-4 8 13-9 6-8-4Z" fill="#37517f" /><path d="m54 15 9-3 2 9-9 3Z" fill="#c9552c" /><path d="m44 26 4-12-1 13Z" fill="#d2683a" /><path d="m20 18 12 3-5 6Z" fill="#57403f" /><path d="m54 5-6 18 2 3 8-17Z" fill="#fff" />
      <path d="M1 17c8 13 82 13 90 0L80 105c-2 17-65 17-68 0Z" fill="url(#tr)" fillOpacity=".96" /><path d="M26 29c14 3 30 3 44-1-6 20-30 24-44 1Z" fill="#b7bbbb" opacity=".4" /><path d="M12 100c10 11 58 11 69 0l-2 7c-6 15-58 15-66 0Z" fill="#7f888b" opacity=".65" />
    </svg>
  );
}

function DockItem({ running = false, children }: { running?: boolean; children: React.ReactNode }) {
  return (
    <div className="flex h-full w-[136px] shrink-0 flex-col items-center">
      <div className="mt-[8px] flex h-[128px] items-center">{children}</div>
      {running && <div className="mt-[8px] size-[8px] rounded-full bg-[#bd8499]" />}
    </div>
  );
}

function Dock() {
  return (
    <div className="relative z-10 mx-auto mt-[2px] flex h-[158px] w-[2040px] shrink-0 rounded-[50px] border-2 border-white/20 bg-[linear-gradient(90deg,#37121e,#45142b_16%,#57191d_33%,#4a1020_44%,#3c1421_55%,#45142a_70%,#4c1434_78%,#43132a_90%,#501728)] pl-[4px] shadow-[0_0_90px_rgba(0,0,0,0.25)]">
      <DockItem running><Finder /></DockItem>
      <DockItem><Launchpad /></DockItem>
      <DockItem><Photos /></DockItem>
      <DockItem running><Terminal /></DockItem>
      <DockItem><CalendarIcon /></DockItem>
      <DockItem running><ChromeIcon /></DockItem>
      <DockItem><AppStore /></DockItem>
      <DockItem><SettingsIcon /></DockItem>
      <DockItem running><div className="flex size-[128px] items-center justify-center bg-white"><SiOpenai className="size-[94px] text-[#0d0d0d]" /></div></DockItem>
      <DockItem running><VSCode /></DockItem>
      <div className="ml-[32px] mr-[28px] mt-[18px] h-[118px] w-[2px] bg-white/25" />
      <DockItem running><WhatsApp /></DockItem>
      <DockItem><Ollama /></DockItem>
      <DockItem running><ReplitDock /></DockItem>
      <div className="ml-[30px] mr-[29px] mt-[18px] h-[118px] w-[2px] bg-white/25" />
      <DockItem><Trash /></DockItem>
    </div>
  );
}

function Wallpaper() {
  return (
    <svg className="absolute inset-0" width="3360" height="2100" viewBox="0 0 3360 2100">
      <defs>
        <linearGradient id="wr" gradientUnits="userSpaceOnUse" x1="2660" y1="2040" x2="3360" y2="1960"><stop stopColor="#440a26" /><stop offset=".2" stopColor="#5b1422" /><stop offset=".6" stopColor="#7a1a19" /><stop offset="1" stopColor="#902010" /></linearGradient>
        <linearGradient id="wm" gradientUnits="userSpaceOnUse" x1="1471" y1="0" x2="2370" y2="0"><stop stopColor="#4a0320" /><stop offset=".5" stopColor="#2c0020" /><stop offset="1" stopColor="#66184f" /></linearGradient>
        <linearGradient id="wt" gradientUnits="userSpaceOnUse" x1="750" y1="0" x2="2800" y2="0"><stop stopColor="#d9772a" /><stop offset=".4" stopColor="#d24f26" /><stop offset=".85" stopColor="#a3241c" /><stop offset="1" stopColor="#03111a" /></linearGradient>
      </defs>
      <path d="M0 0h3360v2100H0Z" fill="#02121c" />
      <path d="M752 40h2048v20H752Z" fill="url(#wt)" />
      <path d="M510 1920 700 2100H1140V1920Z" fill="#2b001b" />
      <path d="M1130 1920h350v180h-344Z" fill="#43121a" />
      <path d="M1471 1920h899v180h-899Z" fill="url(#wm)" />
      <path d="M2370 1920h300v180h-300Z" fill="#30062c" />
      <path d="M2470 2100 2560 1920h800v180Z" fill="url(#wr)" />
    </svg>
  );
}

export default function App() {
  return (
    <div className="relative flex h-[2100px] w-[3360px] flex-col overflow-hidden font-['Inter',sans-serif] leading-none antialiased">
      <Wallpaper />
      <MenuBar />
      <div className="relative mt-[2px] flex h-[1880px] shrink-0 flex-col rounded-[22px] shadow-[0_0_0_1px_#000,0_30px_50px_-6px_rgba(0,0,0,0.85)]">
        <div className="overflow-hidden rounded-t-[22px] border-x-2 border-t-2 border-[#5c5c5c] bg-[#1d1d1d]">
          <TabStrip />
          <div className="rounded-t-[14px] bg-[#353535]">
            <Toolbar />
            <BookmarksBar />
          </div>
        </div>
        <div className="relative flex flex-1 items-center justify-center rounded-b-[22px] bg-[#f8f9fb]">
          <LoginCard />
          <div className="absolute bottom-[32px] right-[32px] flex h-[140px] w-[776px] items-center rounded-[12px] border-2 border-[#e6e3e2] bg-white px-[48px] text-[28px] font-semibold text-[#0c0a09] shadow-[0_20px_30px_-6px_rgba(0,0,0,0.12),0_8px_12px_-8px_rgba(0,0,0,0.1)]"><Fit w={226}>Login successful</Fit></div>
        </div>
      </div>
      <Dock />
    </div>
  );
}
